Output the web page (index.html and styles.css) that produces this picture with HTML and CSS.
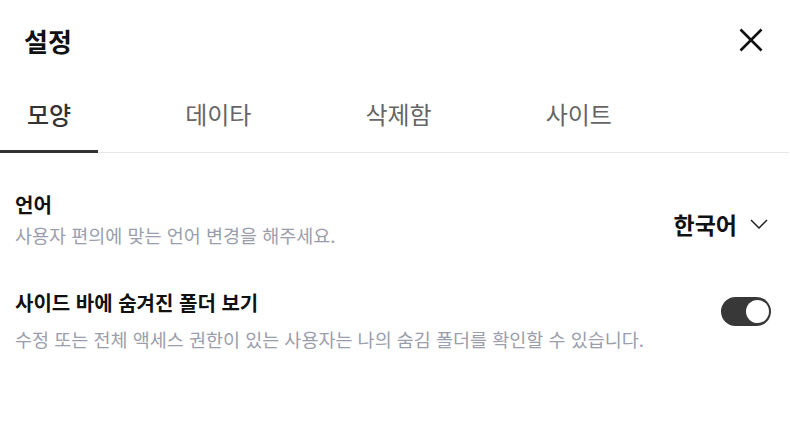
FILE: index.html
```html
<!DOCTYPE html>
<html lang="ko">
<head>
  <meta charset="UTF-8">
  <meta name="viewport" content="width=device-width, initial-scale=1.0">
  <title>설정</title>
  <link rel="stylesheet" href="styles.css">
</head>
<body>
  <div class="settings">
    <div class="settings-head">
      <h1>설정</h1>
      <button class="close-btn" aria-label="닫기">
        <svg width="24" height="24" viewBox="0 0 24 24"><path d="M1.5 1.5 L22.5 22.5 M22.5 1.5 L1.5 22.5" stroke="#111" stroke-width="2.6" fill="none"/></svg>
      </button>
    </div>

    <div class="tabs">
      <span class="tab active">모양</span>
      <span class="tab">데이타</span>
      <span class="tab">삭제함</span>
      <span class="tab">사이트</span>
    </div>

    <div class="option option-lang">
      <div class="option-text">
        <div class="option-title">언어</div>
        <div class="option-desc">사용자 편의에 맞는 언어 변경을 해주세요.</div>
      </div>
      <div class="lang-select">
        <span>한국어</span>
        <svg width="18" height="10" viewBox="0 0 18 10"><path d="M1 1 L9 9 L17 1" stroke="#222" stroke-width="1.5" fill="none"/></svg>
      </div>
    </div>

    <div class="option option-toggle">
      <div class="option-text">
        <div class="option-title">사이드 바에 숨겨진 폴더 보기</div>
        <div class="option-desc">수정 또는 전체 액세스 권한이 있는 사용자는 나의 숨김 폴더를 확인할 수 있습니다.</div>
      </div>
      <div class="toggle on"><div class="knob"></div></div>
    </div>
  </div>
</body>
</html>
```

FILE: styles.css
```css
body { margin: 0; font-family: "Noto Sans CJK KR", "Noto Sans", sans-serif; background: #fff; color: #111; }
.settings { width: 790px; }
.settings-head { display: flex; justify-content: space-between; align-items: center; height: 80px; padding: 0 27px 0 24px; }
.settings-head h1 { margin: 0; font-size: 26px; font-weight: 700; }
.close-btn { background: none; border: none; padding: 0; width: 24px; height: 24px; cursor: pointer; margin-top: -1px; }
.close-btn svg { display: block; }
.tabs { display: flex; gap: 60px; border-bottom: 1px solid #e6e6e6; height: 72px; margin-right: 1px; }
.tab { padding: 0 27px 4px; font-size: 24px; color: #666; display: flex; align-items: center; margin-bottom: -1px; border-bottom: 3px solid transparent; }
.tab.active { color: #333; font-weight: 500; border-bottom-color: #333; }
.option { display: flex; justify-content: space-between; align-items: center; padding: 0 20px 0 15px; }
.option-title { font-size: 20px; font-weight: 700; line-height: 28px; }
.option-desc { font-size: 18.5px; color: #9b9eac; line-height: 26px; margin-top: 3px; }
.option-lang { margin-top: 38px; }
.lang-select { display: flex; align-items: center; gap: 13px; font-size: 23px; font-weight: 700; margin-top: 8px; margin-right: 2px; }
.option-toggle { margin-top: 41px; align-items: flex-start; }
.option-toggle .option-desc { margin-top: 9px; }
.toggle { width: 50px; height: 29px; border-radius: 15px; background: #383838; display: flex; align-items: center; justify-content: flex-end; padding: 0 2px; box-sizing: border-box; margin-top: 8px; margin-right: -1px; }
.knob { width: 23px; height: 23px; border-radius: 50%; background: #fff; }
```
